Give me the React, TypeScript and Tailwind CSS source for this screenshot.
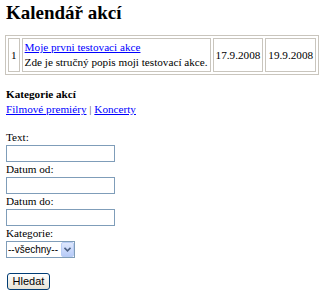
import React from "react";

const App = () => {
  return (
    <div className="min-h-[297px] bg-white px-[6px] pt-[1px] font-['Liberation_Serif',serif] text-[11.2px] leading-[15px] text-black">
      <h1 className="text-[19px] font-bold leading-[23px]">Kalendář akcí</h1>

      <table className="mt-[11px] border-separate border-spacing-[2px] border border-[#c9c5bd] -ml-[1px]">
        <tbody>
          <tr>
            <td className="border border-[#c9c5bd] px-[2px] py-[1px] align-middle">1</td>
            <td className="border border-[#c9c5bd] px-[2px] py-[1px]">
              <a href="#" className="text-[#0000ff] underline">
                Moje prvni testovaci akce
              </a>
              <br />
              Zde je stručný popis moji testovací akce.
            </td>
            <td className="border border-[#c9c5bd] px-[2px] py-[1px] align-middle">17.9.2008</td>
            <td className="border border-[#c9c5bd] px-[2px] py-[1px] align-middle">19.9.2008</td>
          </tr>
        </tbody>
      </table>

      <div className="mt-[12px] font-bold">Kategorie akcí</div>
      <div>
        <a href="#" className="text-[#0000ff] underline">
          Filmové premiéry
        </a>
        <span className="text-[#555]"> | </span>
        <a href="#" className="text-[#0000ff] underline">
          Koncerty
        </a>
      </div>

      <form className="mt-[13px]" onSubmit={(e) => e.preventDefault()}>
        <label className="block">Text:</label>
        <input type="text" className="block h-[17px] w-[109px] border border-[#7f9db9] bg-white px-[2px] text-[11px] outline-none" />
        <label className="block">Datum od:</label>
        <input type="text" className="block h-[17px] w-[109px] border border-[#7f9db9] bg-white px-[2px] text-[11px] outline-none" />
        <label className="block">Datum do:</label>
        <input type="text" className="block h-[17px] w-[109px] border border-[#7f9db9] bg-white px-[2px] text-[11px] outline-none" />
        <label className="block">Kategorie:</label>
        <div className="relative h-[17px] w-[69px]">
          <select className="h-[17px] w-[69px] appearance-none border border-[#7f9db9] bg-white pl-[1px] pr-[14px] font-['Liberation_Sans',sans-serif] text-[10px] leading-[15px] outline-none">
            <option>--všechny--</option>
            <option>Filmové premiéry</option>
            <option>Koncerty</option>
          </select>
          <div className="pointer-events-none absolute right-[1px] top-[1px] flex h-[15px] w-[13px] items-center justify-center rounded-[2px] border border-[#b9cdf5] bg-gradient-to-b from-[#dfe8fd] to-[#b7cbf8]">
            <svg width="7" height="5" viewBox="0 0 7 5">
              <path d="M0.5 0.8 L3.5 3.8 L6.5 0.8" fill="none" stroke="#4d6185" strokeWidth="1.6" />
            </svg>
          </div>
        </div>

        <div className="mt-[15px] pl-[1px]">
          <button
            type="submit"
            className="flex h-[17px] w-[43px] items-center justify-center rounded-[3px] border border-[#003c74] bg-gradient-to-b from-white to-[#e6e3d6] font-['Liberation_Sans',sans-serif] text-[11px] leading-none text-black"
          >
            Hledat
          </button>
        </div>
      </form>
    </div>
  );
};

export default App;
